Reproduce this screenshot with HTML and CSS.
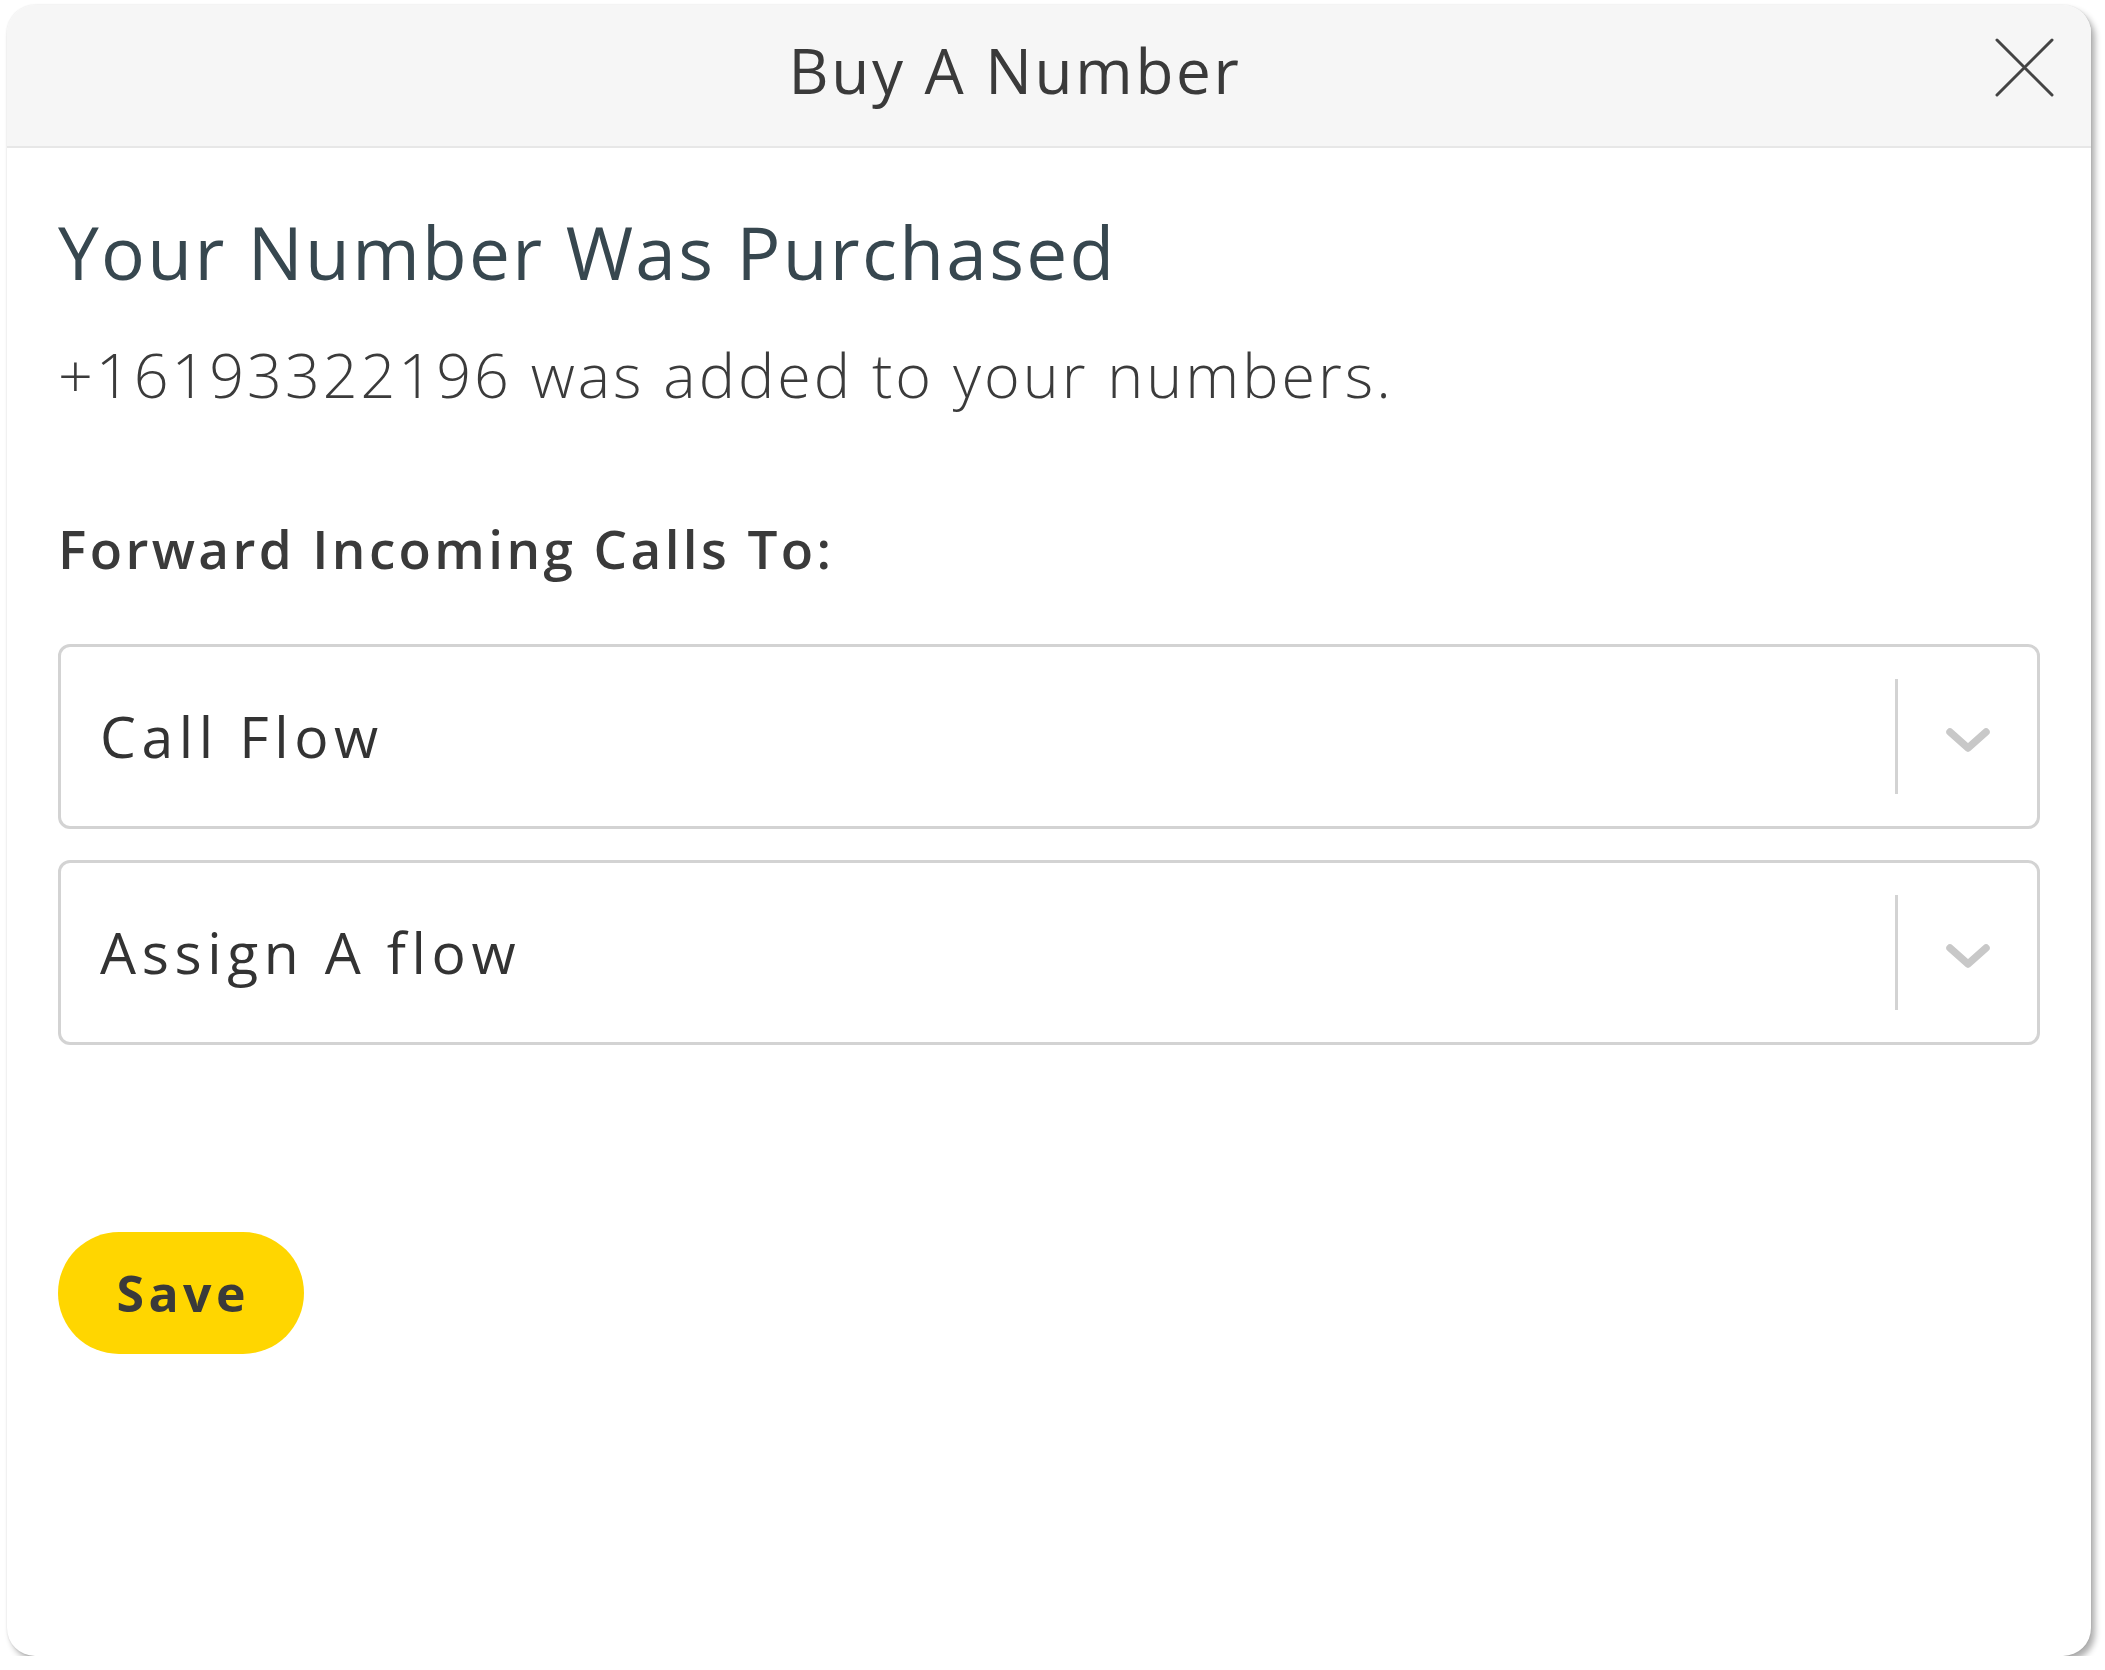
FILE: index.html
```html
<!DOCTYPE html>
<html lang="en">
<head>
<meta charset="utf-8">
<title>Buy A Number</title>
<link rel="stylesheet" href="styles.css">
</head>
<body>
<div class="modal">
  <div class="header">
    <div class="title">Buy A Number</div>
    <button class="close" aria-label="Close">
      <svg viewBox="0 0 59 59" width="59" height="59"><path d="M2 2 L57 57 M57 2 L2 57" stroke="#444" stroke-width="3" fill="none" stroke-linecap="round"/></svg>
    </button>
  </div>
  <div class="content">
    <h1 class="heading">Your Number Was Purchased</h1>
    <p class="sub">+16193322196 was added to your numbers.</p>
    <div class="label">Forward Incoming Calls To:</div>
    <div class="select first">
      <div class="value">Call Flow</div>
      <div class="sep"></div>
      <div class="indicator"><svg viewBox="0 0 44 25" width="44" height="25"><path d="M4 4 L22 20 L40 4" stroke="#c8c8c8" stroke-width="7.5" fill="none" stroke-linecap="round" stroke-linejoin="round"/></svg></div>
    </div>
    <div class="select second">
      <div class="value">Assign A flow</div>
      <div class="sep"></div>
      <div class="indicator"><svg viewBox="0 0 44 25" width="44" height="25"><path d="M4 4 L22 20 L40 4" stroke="#c8c8c8" stroke-width="7.5" fill="none" stroke-linecap="round" stroke-linejoin="round"/></svg></div>
    </div>
    <button class="save">Save</button>
  </div>
</div>
</body>
</html>
```

FILE: styles.css
```css
* { box-sizing: border-box; }
body {
  margin: 0;
  background: #ffffff;
  font-family: "Open Sans", "Noto Sans", sans-serif;
}
.modal {
  margin: 5px 0 0 7px;
  width: 2084px;
  height: 1651px;
  border-radius: 28px;
  background: #ffffff;
  box-shadow: 4px 5px 6px rgba(0, 0, 0, 0.32), 0 0 2px rgba(0, 0, 0, 0.12);
  overflow: hidden;
  display: flex;
  flex-direction: column;
}
.header {
  position: relative;
  height: 143px;
  flex: none;
  background: #f6f6f6;
  border-bottom: 2px solid #e7e7e7;
  display: flex;
  justify-content: center;
  align-items: flex-start;
  padding: 34px 68px 0 0;
}
.title {
  font-size: 62px;
  line-height: 1;
  font-weight: 400;
  letter-spacing: 2.7px;
  color: #3a3a3a;
}
.close {
  position: absolute;
  right: 37px;
  top: 33px;
  width: 59px;
  height: 59px;
  padding: 0;
  border: 0;
  background: none;
  display: block;
}
.close svg { display: block; }
.content {
  padding: 0 51px 0 51px;
  display: flex;
  flex-direction: column;
  align-items: flex-start;
}
.heading {
  margin: 67px 0 0;
  font-size: 73px;
  line-height: 1;
  font-weight: 400;
  letter-spacing: 2.3px;
  color: #37474f;
}
.sub {
  margin: 56px 0 0;
  font-size: 61px;
  line-height: 1;
  font-weight: 300;
  letter-spacing: 3px;
  color: #3b3b3b;
}
.label {
  margin-top: 117px;
  font-size: 53px;
  line-height: 1;
  font-weight: 600;
  letter-spacing: 3.4px;
  color: #3a3a3a;
}
.select {
  align-self: stretch;
  height: 185px;
  border: 3px solid #d3d3d3;
  border-radius: 12px;
  display: flex;
  align-items: center;
  padding-left: 39px;
}
.select.first { margin-top: 69px; }
.select.second { margin-top: 31px; }
.value {
  flex: 1;
  font-size: 57px;
  line-height: 1;
  letter-spacing: 5.6px;
  color: #333333;
}
.sep {
  width: 3px;
  height: 115px;
  background: #d3d3d3;
}
.indicator {
  width: 139px;
  display: flex;
  justify-content: center;
  align-items: center;
  padding-top: 8px;
}
.indicator svg { display: block; }
.save {
  margin-top: 187px;
  width: 246px;
  height: 122px;
  border: 0;
  border-radius: 61px;
  background: #ffd600;
  font-family: "Open Sans", "Noto Sans", sans-serif;
  font-size: 50px;
  line-height: 1;
  font-weight: 700;
  letter-spacing: 4.5px;
  text-indent: 4.5px;
  color: #3a3a3a;
  padding: 0;
}
```
